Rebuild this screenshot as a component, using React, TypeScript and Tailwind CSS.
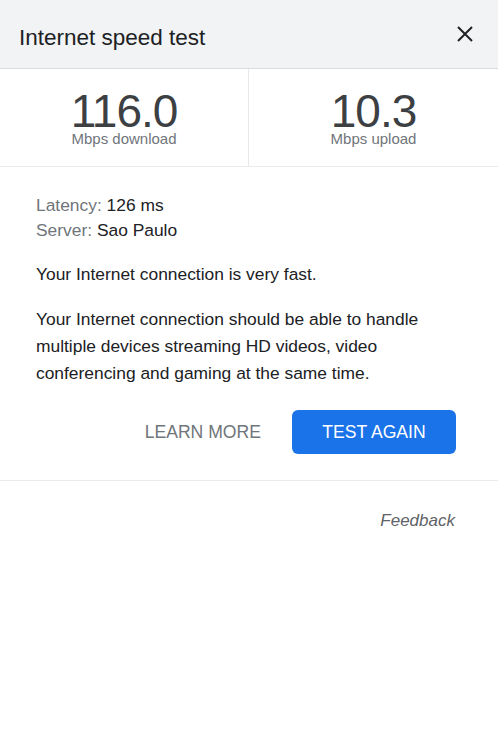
import React from 'react';

export default function App() {
  return (
    <div className="w-[498px] h-[748px] bg-white font-['Liberation_Sans',Arial,sans-serif] text-[#202124]">
      {/* Header */}
      <div className="h-[69px] bg-[#f1f3f4] border-b border-[#dadce0] flex items-center justify-between pl-[19px] pr-[25px]">
        <h1 className="text-[22.5px] text-[#202124] pt-[7px]">Internet speed test</h1>
        <button className="w-[16px] h-[16px] flex items-center justify-center">
          <svg width="16" height="16" viewBox="0 0 16 16">
            <path d="M1 1 L15 15 M15 1 L1 15" stroke="#202124" strokeWidth="2" />
          </svg>
        </button>
      </div>

      {/* Results */}
      <div className="grid grid-cols-2 h-[98px] border-b border-[#ebebeb]">
        <div className="flex flex-col items-center pt-[23px] border-r border-[#e8e8e8]">
          <span className="text-[46px] leading-[38px] text-[#3c4043] tracking-[-1px]">116.0</span>
          <span className="text-[15px] leading-[18px] text-[#70757a]">Mbps download</span>
        </div>
        <div className="flex flex-col items-center pt-[23px]">
          <span className="text-[46px] leading-[38px] text-[#3c4043] tracking-[-1px]">10.3</span>
          <span className="text-[15px] leading-[18px] text-[#70757a]">Mbps upload</span>
        </div>
      </div>

      {/* Details */}
      <div className="px-[36px] pt-[26px] pb-[26px] border-b border-[#ebebeb] text-[17.4px]">
        <div className="leading-[25px]">
          <div><span className="text-[#70757a]">Latency:</span> 126 ms</div>
          <div><span className="text-[#70757a]">Server:</span> Sao Paulo</div>
        </div>
        <p className="mt-[19px] leading-[24px]">Your Internet connection is very fast.</p>
        <p className="mt-[20px] leading-[27px]">
          Your Internet connection should be able to handle multiple devices streaming HD videos, video conferencing and gaming at the same time.
        </p>
        <div className="flex justify-end items-center gap-[31px] mt-[23px] pr-[6px]">
          <button className="text-[17.6px] text-[#70757a] uppercase">Learn more</button>
          <button className="w-[164px] h-[44px] rounded-[6px] bg-[#1a73e8] text-white text-[17.6px] uppercase">Test again</button>
        </div>
      </div>

      {/* Footer */}
      <div className="flex justify-end pr-[43px] pt-[27px]">
        <span className="italic text-[17px] text-[#5f6368]">Feedback</span>
      </div>
    </div>
  );
}
